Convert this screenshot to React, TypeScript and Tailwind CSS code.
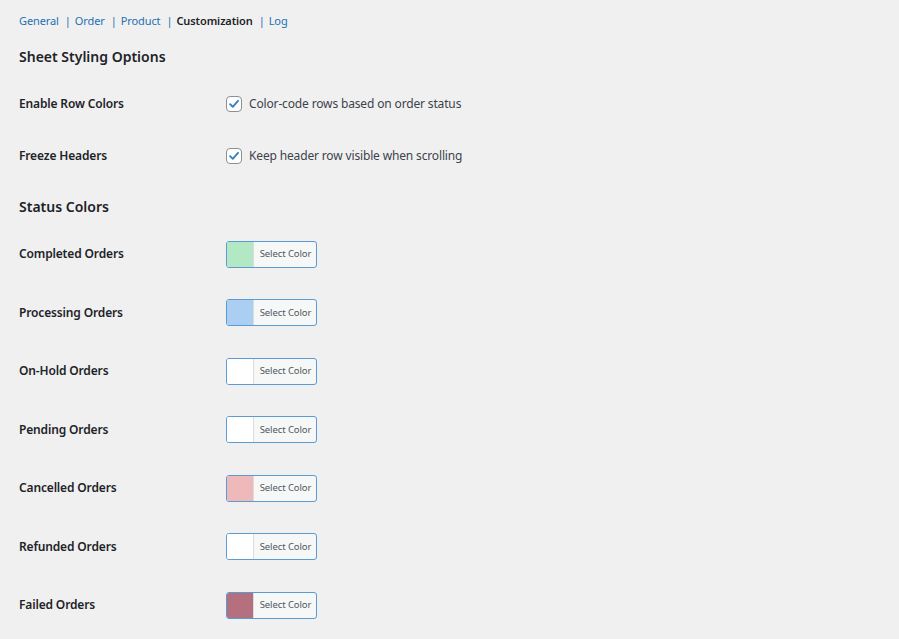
import React from "react";

const font = { fontFamily: '"Noto Sans", "Open Sans", sans-serif' };

function Check() {
  return (
    <span className="flex h-4 w-4 shrink-0 items-center justify-center rounded-[4px] border border-[#8c8f94] bg-white">
      <svg viewBox="0 0 16 16" className="h-[14px] w-[14px]">
        <path d="M3.5 8.2 L6.6 11.2 L12.6 4.4" fill="none" stroke="#3582c4" strokeWidth="2.2" strokeLinecap="round" strokeLinejoin="round" />
      </svg>
    </span>
  );
}

function CheckRow({ label, text }: { label: string; text: string }) {
  return (
    <div className="flex h-[52px] items-center">
      <div className="w-[207px] text-[12px] font-semibold tracking-[-0.15px] text-[#1d2327]">{label}</div>
      <label className="flex items-center gap-[7px] text-[12px] tracking-[-0.15px] text-[#3c434a]">
        <Check />
        <span>{text}</span>
      </label>
    </div>
  );
}

function ColorRow({ label, color }: { label: string; color: string }) {
  return (
    <div className="flex h-[58.5px] items-center">
      <div className="w-[207px] text-[12px] font-semibold tracking-[-0.15px] text-[#1d2327]">{label}</div>
      <div className="flex h-[27px] w-[91px] overflow-hidden rounded-[3px] border border-[#5b9bd5] bg-[#f6f7f7]">
        <span className="h-full w-[27px] border-r border-[#dcdcde]" style={{ backgroundColor: color }} />
        <span className="flex flex-1 items-center justify-center pl-[1px] text-[9.5px] tracking-[-0.1px] text-[#50575e]">Select Color</span>
      </div>
    </div>
  );
}

export default function App() {
  const tabs = ["General", "Order", "Product", "Customization", "Log"];
  return (
    <div className="min-h-[639px] w-full bg-[#f0f0f1] px-[19px] pt-[13px]" style={font}>
      <div className="flex h-4 items-center text-[11px] tracking-[-0.1px]">
        {tabs.map((t, i) => (
          <React.Fragment key={t}>
            {i > 0 && <span className="ml-[6px] mr-[4px] text-[#2271b1]">|</span>}
            <span className={t === "Customization" ? "font-semibold text-[#1d2327]" : "text-[#2271b1]"}>{t}</span>
          </React.Fragment>
        ))}
      </div>
      <h2 className="mt-[15px] flex h-6 items-center text-[14px] font-semibold text-[#1d2327]">Sheet Styling Options</h2>
      <div className="mt-[10px]">
        <CheckRow label="Enable Row Colors" text="Color-code rows based on order status" />
        <CheckRow label="Freeze Headers" text="Keep header row visible when scrolling" />
      </div>
      <h2 className="mt-[12px] flex h-6 items-center text-[14px] font-semibold text-[#1d2327]">Status Colors</h2>
      <div className="mt-[7px]">
        <ColorRow label="Completed Orders" color="#b3e8c4" />
        <ColorRow label="Processing Orders" color="#abcff2" />
        <ColorRow label="On-Hold Orders" color="#ffffff" />
        <ColorRow label="Pending Orders" color="#ffffff" />
        <ColorRow label="Cancelled Orders" color="#efb9b9" />
        <ColorRow label="Refunded Orders" color="#ffffff" />
        <ColorRow label="Failed Orders" color="#b5707f" />
      </div>
    </div>
  );
}
